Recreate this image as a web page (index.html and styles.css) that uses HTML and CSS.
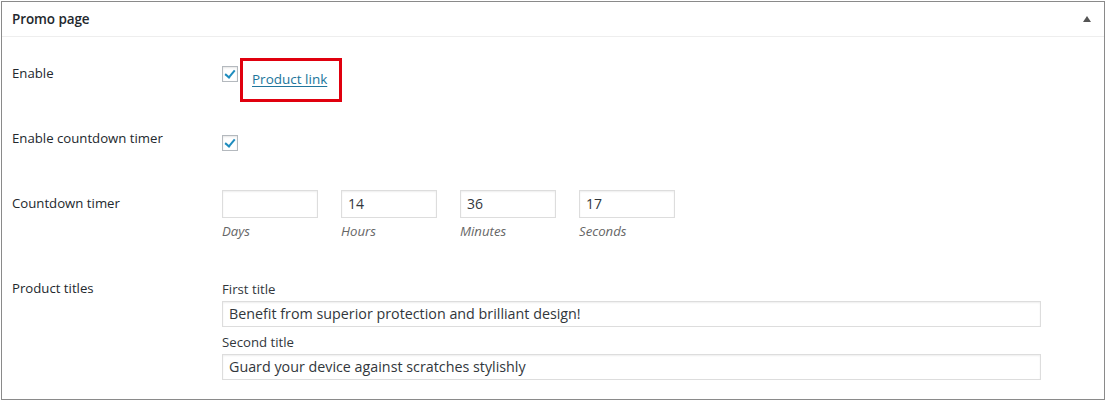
FILE: index.html
```html
<!DOCTYPE html>
<html>
<head>
<meta charset="utf-8">
<link rel="stylesheet" href="styles.css">
</head>
<body>
<div class="postbox">
  <div class="hndle">
    <h2 class="title">Promo page</h2>
    <span class="toggle"></span>
  </div>
  <div class="inside">
    <div class="row row-enable">
      <div class="label">Enable</div>
      <div class="field field-inline">
        <span class="check checked"></span>
        <span class="highlight"><a class="link" href="#">Product link</a></span>
      </div>
    </div>
    <div class="row row-timer-enable">
      <div class="label">Enable countdown timer</div>
      <div class="field">
        <span class="check checked"></span>
      </div>
    </div>
    <div class="row row-timer">
      <div class="label">Countdown timer</div>
      <div class="field timer">
        <div class="unit"><div class="box"></div><div class="caption">Days</div></div>
        <div class="unit"><div class="box">14</div><div class="caption">Hours</div></div>
        <div class="unit"><div class="box">36</div><div class="caption">Minutes</div></div>
        <div class="unit"><div class="box">17</div><div class="caption">Seconds</div></div>
      </div>
    </div>
    <div class="row row-titles">
      <div class="label">Product titles</div>
      <div class="field titles">
        <div class="sub">First title</div>
        <div class="wide">Benefit from superior protection and brilliant design!</div>
        <div class="sub">Second title</div>
        <div class="wide">Guard your device against scratches stylishly</div>
      </div>
    </div>
  </div>
</div>
</body>
</html>
```

FILE: styles.css
```css
html, body {
  margin: 0;
  padding: 0;
  background: #fff;
}
body {
  padding: 1px 0 0 1px;
  font-family: "Open Sans", "Noto Sans", sans-serif;
  font-size: 13.2px;
  color: #32373c;
}
.postbox {
  box-sizing: border-box;
  width: 1104px;
  height: 399px;
  border: 1px solid #8a8a8a;
  background: #fff;
}
.hndle {
  height: 34px;
  border-bottom: 1px solid #eee;
  display: flex;
  align-items: center;
  justify-content: space-between;
  padding: 0 13px 0 10px;
}
.title {
  margin: 0;
  font-size: 13.5px;
  font-weight: 600;
  color: #23282d;
  letter-spacing: -0.1px;
}
.toggle {
  width: 0;
  height: 0;
  border-left: 4px solid transparent;
  border-right: 4px solid transparent;
  border-bottom: 6px solid #555;
  margin-top: -1px;
}
.inside {
  padding: 0 0 0 10px;
}
.row {
  display: flex;
  align-items: flex-start;
}
.label {
  width: 210px;
  flex: none;
  line-height: 18px;
  color: #23282d;
}
.field {
  line-height: 18px;
}
.row-enable {
  padding-top: 21px;
  height: 44px;
}
.row-enable .label {
  padding-top: 6px;
}
.field-inline {
  display: flex;
  align-items: flex-start;
}
.check {
  box-sizing: border-box;
  display: inline-block;
  width: 16px;
  height: 16px;
  border: 1px solid #b4b9be;
  box-shadow: inset 0 1px 2px rgba(0,0,0,0.1);
  position: relative;
  background: #fff;
}
.check.checked::after {
  content: "";
  position: absolute;
  left: 4px;
  top: 1px;
  width: 4px;
  height: 8px;
  border-right: 2px solid #1e8cbe;
  border-bottom: 2px solid #1e8cbe;
  transform: rotate(40deg);
}
.row-enable .check {
  margin-top: 8px;
}
.highlight {
  box-sizing: border-box;
  display: inline-block;
  margin-left: 2px;
  width: 102px;
  height: 44px;
  border: 3px solid #e0000e;
  padding: 9px 0 0 9px;
}
.link {
  color: #21759b;
  font-size: 13.5px;
  text-decoration: underline;
  text-underline-offset: 2px;
}
.row-timer-enable {
  padding-top: 27px;
  height: 22px;
}
.row-timer-enable .check {
  margin-top: 6px;
}
.row-timer {
  padding-top: 39px;
  height: 52px;
}
.row-timer .label {
  padding-top: 4px;
}
.timer {
  display: flex;
  gap: 23px;
}
.unit {
  width: 96px;
}
.box {
  box-sizing: border-box;
  width: 96px;
  height: 28px;
  border: 1px solid #ddd;
  box-shadow: inset 0 1px 2px rgba(0,0,0,0.07);
  padding: 4px 6px;
  font-size: 14px;
  line-height: 18px;
  color: #32373c;
}
.caption {
  font-style: italic;
  color: #666;
  margin-top: 4px;
  line-height: 18px;
}
.row-titles {
  padding-top: 37px;
}
.titles {
  display: flex;
  flex-direction: column;
  padding-top: 1px;
}
.sub {
  line-height: 18px;
  color: #32373c;
}
.wide {
  box-sizing: border-box;
  width: 819px;
  height: 26px;
  margin-top: 3px;
  margin-bottom: 6px;
  border: 1px solid #ddd;
  box-shadow: inset 0 1px 2px rgba(0,0,0,0.07);
  padding: 2px 6px;
  font-size: 14.3px;
  line-height: 20px;
  color: #32373c;
}
```
